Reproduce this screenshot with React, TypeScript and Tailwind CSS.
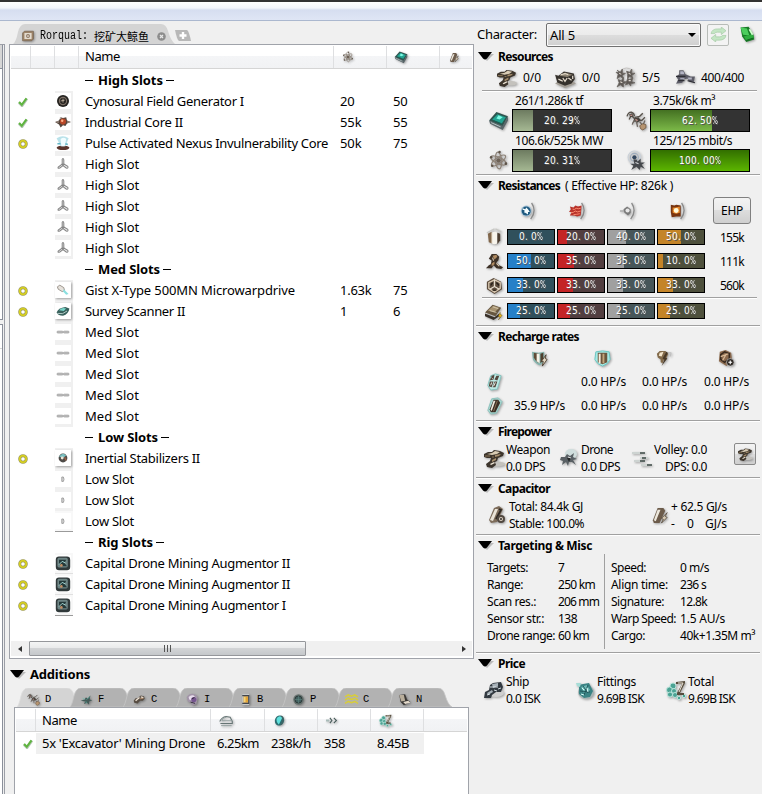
import React, { useLayoutEffect, useRef, useState } from "react";

/* Text run that is tracked so that it fills a given advance width. */
function T({ w, className = "", children }: { w?: number; className?: string; children: string }) {
  const ref = useRef<HTMLSpanElement>(null);
  const [ls, setLs] = useState(0);
  useLayoutEffect(() => {
    if (!w || !ref.current) return;
    ref.current.style.letterSpacing = "0px";
    const natural = ref.current.getBoundingClientRect().width;
    const v = (w - natural) / children.length;
    ref.current.style.letterSpacing = v + "px";
    setLs(v);
  }, [w, children]);
  return (
    <span ref={ref} style={{ letterSpacing: ls }} className={"inline-block w-fit shrink-0 whitespace-pre " + className}>
      {children}
    </span>
  );
}

const art: Record<string, React.ReactNode> = {
  turret: (
    <>
      <ellipse cx="13" cy="16" rx="8" ry="2.5" fill="#c4c2bd" />
      <path d="M0 6l4-2 4 0 2-2 6 1 4 2-1 3-5 2-1 3-2 1 1 3-4 3-5-1-1-3 4-3 1-3-4 0-3-1z" fill="#3d352c" />
      <path d="M3 6l5-1 3-2 5 1-3 2-5 1z" fill="#d9ccb4" />
      <path d="M11 7l6-1-2 2-4 1zM8 12l4-2 0 2-4 2z" fill="#a58d6b" />
      <path d="M6 16l4-2 1 1-4 2z" fill="#efe6d6" />
      <path d="M1 8l5 0M8 9l2 0" stroke="#8b7757" />
    </>
  ),
  launcher: (
    <>
      <path d="M1 15l9 4 10-4-3-2H4z" fill="#a29c93" />
      <path d="M1 7l3 1 5-4 9 2 1 5-3 4-6 2-7-3z" fill="#35312c" />
      <path d="M5 8l5-3 7 2-5 2z" fill="#8e8473" />
      <path d="M4 11l4 2M8 10l2 3 2-3M13 10l3 2M17 8v3" stroke="#e8dfd0" fill="none" strokeWidth="1.1" />
      <path d="M6 7l4-1 3 1" stroke="#e5dccb" fill="none" />
    </>
  ),
  drones: (
    <>
      <circle cx="11" cy="9" r="8" fill="none" stroke="#c0bdbb" strokeWidth=".8" />
      <g stroke="#6b6662" strokeWidth=".8" fill="#5d5854">
        <path d="M2 3l3 2 2-3 0 4 3 0-3 2 1 3-3-2-3 2 1-4-2-2 3 0z" />
        <path d="M11 4l3 1 2-3 0 4 3 0-3 2 1 3-3-2-2 2 0-4z" />
        <path d="M3 12l3 1 2-3 0 4 4 0-4 2 0 3-3-2-3 2 2-4z" />
        <path d="M12 11l2 1 3-2-1 4 3 1-4 1 0 2-2-2-3 1 1-3z" />
      </g>
      <path d="M4 6l2 1M13 6l2 1M5 14l2 1M13 13l2 0" stroke="#e0d8d0" strokeWidth="1" />
    </>
  ),
  calib: (
    <>
      <path d="M1 9l3-2 0-4 4 0 2 4 5 2 4 0-1 5-4 0-2-3-4 1-1 3-6 1 2-4z" fill="#5c5c67" />
      <path d="M5 4l3 0 1 3-4 0zM12 10l4 0 0 2-3 0z" fill="#b3b4c4" />
      <path d="M1 9h9M3 13h6M12 13l7 2" stroke="#2e2e35" strokeWidth="1.1" />
      <path d="M5 11l4 0" stroke="#a6a7b7" strokeWidth="1.300" />
    </>
  ),
  cpu: (
    <>
      <path d="M1 10L8 2l11 4-5 10z" fill="#2f5650" />
      <path d="M1 10l13 5v4L2 13zM14 15l5-9v4l-5 9z" fill="#5a666a" />
      <path d="M4 9l5-5 8 3-4 6z" fill="#23a492" />
      <path d="M8 8l2-3 4 2-3 2z" fill="#7df9e3" />
      <path d="M3 12l9 4" stroke="#b9cccb" strokeWidth=".9" />
      <path d="M5 10l8 3" stroke="#1d5f55" />
    </>
  ),
  atom: (
    <>
      <g fill="none" stroke="#8d8277" strokeWidth="1.1">
        <ellipse cx="10" cy="10" rx="8" ry="3" transform="rotate(25 10 10)" />
        <ellipse cx="10" cy="10" rx="8" ry="3" transform="rotate(85 10 10)" />
        <ellipse cx="10" cy="10" rx="8" ry="3" transform="rotate(145 10 10)" />
      </g>
      <circle cx="10" cy="10" r="2.2" fill="#6d6156" />
      <g fill="#5d5349">
        <circle cx="3" cy="7" r="1.2" /><circle cx="17" cy="13" r="1.3" /><circle cx="11" cy="2" r="1.2" /><circle cx="4" cy="15" r="1.2" />
      </g>
    </>
  ),
  drones2: (
    <>
      <path d="M1 6q1-4 4-4 3 1 3 4M3 9l2-4 3 3M7 12l2-5 4-1 3-3M10 9l5 1 3-3" fill="none" stroke="#57514a" strokeWidth="1.3" />
      <path d="M3 4l3-1 1 3-3 1zM8 8l4-1 2 3-3 2-3-1z" fill="#47423c" />
      <path d="M6 14q1-5 4-3l1 5M13 11l3 4 2-5" fill="none" stroke="#6f6862" strokeWidth="1.3" />
      <path d="M13 15l3-2 3 1 0 3-3 2-2-1z" fill="#b69470" stroke="#6a533c" strokeWidth=".7" />
      <path d="M9 9l2 1M4 5l2 0" stroke="#e7a9a0" />
    </>
  ),
  bandwidth: (
    <>
      <g fill="none" stroke="#c9d0d8"><circle cx="8" cy="7" r="6" /><circle cx="8" cy="7" r="3.8" stroke="#9dadbf" /></g>
      <circle cx="8" cy="7" r="2" fill="#33475f" />
      <path d="M7 9l3 0 1 2 3-3 0 4 4 0-3 2 3 4-4-2-1 3-3-3-5 3 2-4-3-2 4 0z" fill="#45484c" />
      <path d="M9 12l3 1" stroke="#d7d9dd" />
    </>
  ),
  em: (
    <>
      <circle cx="8" cy="10" r="6" fill="#a9c6da" /><circle cx="8" cy="10" r="5" fill="#1f5a80" />
      <path d="M4 7l3 1 1-2 2 2 2 3-2 0 0 3-3-2-1 0 0-3-2 0z" fill="#f4fdff" />
      <path d="M14 1q6 9-1 18" fill="none" stroke="#8a8a8a" strokeWidth="1.5" />
    </>
  ),
  thermal: (
    <>
      <path d="M1 5l4 1 2-2 3 1 4-1-1 11-4 1-3-1-5 0 2-4-3 0 2-3z" fill="#b8332b" />
      <path d="M4 8q2 1 4-1 2 1 5 0M2 12q3 0 5-2 2 2 6 0M5 14q3 0 7-1" stroke="#ff8f72" fill="none" strokeWidth="1" />
      <path d="M14 1q6 9-1 18" fill="none" stroke="#8a8a8a" strokeWidth="1.5" />
    </>
  ),
  kinetic: (
    <>
      <path d="M1 10h6" stroke="#a8a8a8" strokeWidth="1.600" />
      <path d="M5 8l4-3 4 3v4l-3 3-4-3z" fill="#7a7a7a" /><circle cx="9.500" cy="9.500" r="2.3" fill="#e6e6e6" />
      <path d="M14 1q6 9-1 18" fill="none" stroke="#8a8a8a" strokeWidth="1.5" />
    </>
  ),
  explosive: (
    <>
      <path d="M2 3l4 1 2-1 5 1 0 5 0 7-5 0-5 1-1-6z" fill="#78340f" />
      <path d="M4 6l3 0 5-1v7l-4 1-4-1z" fill="#e88a2c" /><circle cx="8" cy="9.5" r="2.7" fill="#fffbdc" />
      <path d="M14 1q6 9-1 18" fill="none" stroke="#8a8a8a" strokeWidth="1.5" />
    </>
  ),
  shield: (
    <>
      <path d="M2 5l8-4M11 1l6 3" stroke="#c8c8c4" fill="none" strokeWidth="1.4" />
      <path d="M3 6l4-2v12l-3-1z" fill="#80664b" />
      <path d="M7 5q4-2 6 0v11q-3 2-6 0z" fill="#f7f4ec" /><path d="M13 5l3 1v7l-3 4z" fill="#4c3e31" />
      <path d="M7 5v11" stroke="#b9a58a" />
    </>
  ),
  armor: (
    <>
      <path d="M7 2l5 0 3 3-1 4-2 2 3 3 4 2-2 2-5-1-3-3-2 3-6 0 3-3 2-1 1-4-3-2 2-3z" fill="#3d3127" />
      <path d="M8 4l4-1 1 2-3 3zM7 12l3-2 0 3-3 2z" fill="#b08b62" />
      <path d="M12 12l3 3M8 6l1 3" stroke="#e3d2b8" strokeWidth="1.1" fill="none" />
    </>
  ),
  hull: (
    <>
      <path d="M9 2l8 4 1 8-8 5-8-5 0-8z" fill="#5d4d3d" />
      <path d="M10 4l6 3v6l-6 4-6-4V7z" fill="none" stroke="#d8c8b1" strokeWidth="1.4" />
      <path d="M10 4v7l-5 3M10 11l5 3" stroke="#e8dfd0" strokeWidth="1.4" fill="none" />
      <path d="M8 7l-2 3M12 7l3 3M8 15h4" stroke="#241d17" strokeWidth="1.3" />
    </>
  ),
  damage: (
    <>
      <path d="M0 11l8-8 9 3-6 9z" fill="#66563f" /><path d="M3 9l6-5 6 2-5 5z" fill="#a69270" />
      <path d="M0 12l10 4 5-4v3l-6 4-9-4z" fill="#383028" />
      <path d="M16 11l-2 4 2 1-2 3 4-5-2-1z" fill="#e8b51a" stroke="#6b541a" strokeWidth=".5" /><path d="M5 9l7 2M8 5l6 2" stroke="#ddd2b8" strokeWidth=".8" />
    </>
  ),
  shieldRegen: (
    <>
      <path d="M2 3l7 1 6-1v9q-2 4-5 5-5-2-7-6z" fill="#86b5af" />
      <path d="M4 4l5 1v10q-4-3-5-6z" fill="#5f4b36" /><path d="M7 5l3 0v10l-3-2z" fill="#f5f1e5" /><path d="M11 5l3-1v8l-3 3z" fill="#4f3f2e" />
      <path d="M17 6l-5 7 2 0-1 5 5-7-2-1z" fill="#e5dac6" stroke="#463828" strokeWidth=".9" />
    </>
  ),
  shieldRep: (
    <>
      <path d="M3 3l7-1 7 1 1 8q-2 5-8 7-6-2-8-7z" fill="#a8eae6" stroke="#69c5c0" />
      <path d="M5 4h10v10l-5 2-5-2z" fill="#6b563d" />
      <path d="M7 5v10" stroke="#f7efe0" strokeWidth="2" /><path d="M11 5v10" stroke="#c2a57c" strokeWidth="2" />
    </>
  ),
  armorRep: (
    <>
      <path d="M3 5l3-3 6 0 3 3-2 5-3 2-1 3-2-1 0-3-3-2z" fill="#816949" /><path d="M6 4l4-1-2 5-3-1z" fill="#f3e5cc" />
      <path d="M13 3l-4 7 2 1-3 7 6-8-2-1 3-5z" fill="#463726" /><path d="M14 4l4 0-1 4" stroke="#bbb" fill="none" />
    </>
  ),
  hullRep: (
    <>
      <path d="M4 3l6-2 6 3 1 9-6 5-8-5z" fill="#8b6a4e" />
      <path d="M5 6l4-3 5 2 0 5-5 4-4-3z" fill="none" stroke="#38291d" strokeWidth="1.6" />
      <path d="M5 8l8-3M7 12l4-7" stroke="#d8b996" strokeWidth="1.2" />
      <circle cx="15" cy="14" r="4" fill="#2d2823" stroke="#ddd" strokeWidth=".6" /><path d="M15 12v4M13 14h4" stroke="#fff" strokeWidth="1.2" />
    </>
  ),
  burst: (
    <>
      <path d="M6 4l5-2 6 2-4 14-7 1-3-5z" fill="#bdeae5" stroke="#83c3be" />
      <path d="M7 4l3-1-1 5-4 1zM12 4l3 0-2 5-3-1zM5 10l4 0-2 6-3-1zM10 10l3 0-2 6-3 0z" fill="#54483e" />
      <path d="M7 6l1 1M6 14l1-3M9 15l2-4" stroke="#f6f2ea" />
    </>
  ),
  sustain: (
    <>
      <path d="M7 3l7-1 4 4-6 12-6 1-3-4z" fill="#a9d8d2" stroke="#8cc2bd" />
      <path d="M9 4l5 0 2 3-5 10-5 0-1-3z" fill="#3a2f26" /><path d="M9 5l2 0-4 11-1-2z" fill="#f0eadf" /><path d="M13 5l-4 11" stroke="#8c7255" />
    </>
  ),
  spider: (
    <>
      <ellipse cx="12" cy="6" rx="6" ry="5" fill="#d0dedd" />
      <path d="M2 9l4 0 2-3 3 2 4-3-1 4 4 2-4 1 3 5-4-3-3 0-1 4-2-4-4 3 1-4-3-1z" fill="#596064" />
      <path d="M8 10l4 0-2 4z" fill="#24292a" /><path d="M9 9l3 1" stroke="#fff" strokeWidth=".8" />
    </>
  ),
  volley: (
    <>
      <path d="M0 5h8M2 13h8M8 10h8M9 17h8" stroke="#cdd3d1" strokeWidth="2" />
      <path d="M8 5h5M10 10h4M8 13h5M15 17h5" stroke="#3c4946" strokeWidth="1.7" />
    </>
  ),
  cap: (
    <>
      <path d="M7 3l5-2 4 3-6 13-6 1-2-3z" fill="#7d6c5a" /><path d="M8 4l3 0-5 12-3-1z" fill="#ebe4d8" />
      <path d="M12 4l2 1-5 9" stroke="#2f2924" strokeWidth="1.8" fill="none" />
      <circle cx="14" cy="14" r="4" fill="#514840" /><circle cx="14" cy="14" r="2" fill="#ddd3c5" /><circle cx="14" cy="14" r="1" fill="#302b27" />
    </>
  ),
  capFlow: (
    <>
      <path d="M7 2l6 0 2 3-6 13-6 0-1-3z" fill="#6c5b4a" /><path d="M7 4l3 0-5 12-2-1z" fill="#ede8dd" />
      <path d="M17 7l-6 6 2 1-2 4 6-6-2-1z" fill="#d5c8b2" stroke="#4a3d30" strokeWidth=".8" />
    </>
  ),
  ship: (
    <>
      <ellipse cx="12" cy="13" rx="8" ry="4" fill="#cfcfcf" />
      <path d="M6 5l3-2 8-1 2 5-2 5-5 0-4 3-1 3-7 0 1-6 4-2z" fill="#333a41" />
      <path d="M8 4l6-1 0 3-5 2zM3 13l5-3 1 2-5 3z" fill="#a6b0b7" />
      <path d="M6 7l8 0M14 9l3-1M3 15l3-1M10 10l3 1" stroke="#e4edf2" strokeWidth=".9" />
    </>
  ),
  fittings: (
    <>
      <ellipse cx="11" cy="12" rx="8" ry="7" fill="#a8b5b4" />
      <path d="M4 5l4-1 6-1 4 8-3 6-6 1-5-4z" fill="#3a8384" />
      <path d="M6 7l6-2 3 5-6 3z" fill="#6fbab6" /><path d="M1 3l5 0-1 4-3-1z" fill="#a6ddd7" />
      <path d="M8 6l5 7M13 5l-4 10M5 11l10 1" stroke="#1d5054" strokeWidth=".9" />
      <path d="M7 8l2 2M12 8l1 4M6 14l3 1" stroke="#d8fffb" />
    </>
  ),
  total: (
    <>
      <g fill="#4ca394" stroke="#bfe8df" strokeWidth=".9">
        <circle cx="7" cy="6" r="3" /><circle cx="3.500" cy="10" r="3" /><circle cx="8" cy="11" r="2.5" /><circle cx="4" cy="14.500" r="2.500" /><circle cx="9" cy="15" r="2.5" /><circle cx="13" cy="18" r="1.7" /><circle cx="18" cy="16" r="1.7" />
      </g>
      <path d="M10 2l9-1 0 2-5 10 4 0 0 2-7 0 0-2 5-9-6 0z" fill="#574d3d" /><path d="M12 3h5l-4 9" stroke="#f6efe3" strokeWidth=".9" fill="none" />
    </>
  ),
  cyno: (
    <>
      <circle cx="10" cy="10" r="7.500" fill="#24221f" /><circle cx="10" cy="10" r="4.500" fill="none" stroke="#7c7066" strokeWidth="1.5" />
      <path d="M10 7v5M7 10l5-1" stroke="#cdbcaa" />
    </>
  ),
  core: (
    <>
      <path d="M0 10l5-2 2-4 3 1 4-1 1 4 5 2-5 2-2 3-3-1-3 3-2-4z" fill="#55453c" />
      <circle cx="10" cy="9.500" r="3.800" fill="#b84727" /><circle cx="9" cy="8.5" r="1.5" fill="#ffb087" /><path d="M2 10h3M15 10h3M6 5l2 1" stroke="#d0c2b6" />
    </>
  ),
  nexus: (
    <>
      <ellipse cx="10" cy="16" rx="8" ry="2.800" fill="#5a352d" />
      <path d="M2 4q8-5 15 0l-4 10H7z" fill="#b9e2ea" /><path d="M7 5q4-3 7 0l-2 9H8z" fill="#f1fdff" />
      <path d="M3 11h4M13 11l3 1" stroke="#61b5c5" strokeWidth="2" />
    </>
  ),
  mwd: (
    <>
      <path d="M3 6l3-2 5 3 1 4-3 1-5-3z" fill="#e6e2dc" stroke="#8a8279" /><path d="M11 9l6 6-3 1-4-4z" fill="#8adfe0" />
    </>
  ),
  scanner: (
    <>
      <path d="M2 12q2-6 11-7l5 2q-1 7-8 9-6 0-8-4z" fill="#38615c" /><path d="M5 9q4-4 9-2l-3 3z" fill="#77d5c9" /><path d="M3 13q7 2 12-3" stroke="#d0e3df" fill="none" />
    </>
  ),
  inertia: (
    <>
      <circle cx="10" cy="10" r="5.5" fill="#4e4b48" /><path d="M5 8q5-6 9-1l-4 3z" fill="#79bfc0" /><circle cx="9" cy="10" r="1.800" fill="#eee5d6" /><path d="M12 9l2 4" stroke="#9b5f44" strokeWidth="1.800" />
    </>
  ),
  rig: (
    <>
      <rect x="1" y="2" width="18" height="17" rx="4" fill="#30393a" /><rect x="3" y="3.500" width="13" height="12" rx="2" fill="#6e8585" />
      <path d="M5 6h9l-2 4 3 4H9l-4-3z" fill="#24393a" /><path d="M5 12l4-4 4 2" stroke="#a9ddd7" fill="none" strokeWidth="1.2" /><circle cx="8" cy="13" r="1.6" fill="#c48e65" />
    </>
  ),
  high: (
    <g fill="#eee" stroke="#858585" strokeWidth="1.3">
      <path d="M9 4q1.500-2 2 1v6H9z" /><path d="M9 10l1 2-4 3q-3 1-2-1z" /><path d="M11 10l5 3q1 3-2 2l-4-3z" />
    </g>
  ),
  med: (
    <g fill="#c4c4c4" stroke="#a0a0a0" strokeWidth="1.1"><rect x="2.500" y="9" width="7.500" height="2.2" rx="1" /><rect x="10.500" y="9" width="7" height="2.2" rx="1" /></g>
  ),
  low: <path d="M8.500 7.500h2q1.500 3 0 5.500h-2z" fill="#d6d6d6" stroke="#9a9a9a" strokeWidth="1.1" />,
  range: (
    <>
      <path d="M1 12q3-6 9-7l6 1 3 6v3H2" fill="none" stroke="#657474" strokeWidth="1.5" /><path d="M10 6q-5 1-6 5h15M3 18h15" stroke="#93a09f" fill="none" strokeWidth="1.3" />
    </>
  ),
  speed: (
    <>
      <ellipse cx="10" cy="10" rx="7" ry="8" fill="#2b6d70" transform="rotate(25 10 10)" /><path d="M6 6q5-5 8 0l-5 10q-5-4-3-10z" fill="#5fe0dd" /><path d="M13 3q6 5-1 14" stroke="#4e5c5c" fill="none" strokeWidth="1.5" />
    </>
  ),
  track: <><path d="M0 10h5" stroke="#a8bbb8" strokeWidth="3" /><path d="M6 6l3 4-3 4M12 6l4 4-4 4" fill="none" stroke="#465a58" strokeWidth="1.7" /></>,
  fighter: (
    <>
      <path d="M1 12l6-2 2-3 3 1 4-4-1 6 4 1-5 2 0 5-3-3-5 2 2-4z" fill="#435a57" /><path d="M4 8l4 2M10 10l5-4M9 13l1 3" stroke="#65c7b6" strokeWidth=".9" />
    </>
  ),
  cargo: (
    <>
      <path d="M1 12l3-4 3 0 5-4 5 1 1 4-3 3-4 0-4 4-5-1z" fill="#574d43" /><path d="M4 12l6-5M12 6l4 1" stroke="#f0e4d5" strokeWidth="2" /><path d="M11 9l5-1" stroke="#b59070" strokeWidth="1.5" />
    </>
  ),
  implant: (
    <>
      <path d="M1 7q2-6 9-6 7 1 8 7l-2 9-6 2-2-4-5-2z" fill="#a294a8" /><path d="M4 6q4-4 8-2l3 4-5 4-5-2z" fill="#e8ddec" /><circle cx="12" cy="10" r="4" fill="#75558e" /><path d="M7 14l7 2M9 9l4-2" stroke="#302738" strokeWidth="1.4" />
    </>
  ),
  booster: (
    <>
      <rect x="5" y="1" width="11" height="18" rx="2" fill="#c5c8c9" /><path d="M7 5h7v10H7z" fill="#e3a537" /><path d="M5 4h11M5 16h11M15 4v12" stroke="#42454b" strokeWidth="1.800" /><path d="M9 6v8" stroke="#fff1a1" strokeWidth="1.500" />
    </>
  ),
  projected: (
    <>
      <circle cx="10" cy="10" r="8" fill="#66726f" /><circle cx="10" cy="10" r="5.500" fill="#42605f" stroke="#2d393a" strokeWidth="1.5" /><path d="M4 10h12M10 4v12" stroke="#67908a" strokeWidth=".7" />
    </>
  ),
  command: <path d="M0 6l5-3 5 2 5-2 5 3M0 11l5-3 5 2 5-2 5 3M0 16l5-3 5 2 5-2 5 3" fill="none" stroke="#d8cd3a" strokeWidth="2.3" />,
  note: (
    <>
      <path d="M2 3l9-1 3 8 5 4-10 5-5-5z" fill="#3b3835" /><path d="M2 3l7 0 2 9-6 1z" fill="#b9ae9b" /><path d="M8 14l8-2 3 3-8 2z" fill="#e4dacb" />
    </>
  ),
  save: (
    <>
      <path d="M2 2l10-1 6 10 1 6-10 3-5-7z" fill="#177b25" /><path d="M2 2l8 1 3 9-8-1z" fill="#4ccd5d" /><path d="M6 13l11-3 2 5-10 3z" fill="#2fae3f" /><path d="M13 4l4 7" stroke="#d2ffd1" strokeWidth="2.200" /><path d="M9 18l9-3" stroke="#0b541a" />
    </>
  ),
  shipTab: (
    <>
      <path d="M1 5l3-3h15v13l-3 3H1z" fill="#9d8468" stroke="#6b5743" /><path d="M4 5h12v10H4z" fill="#e3dbcf" /><circle cx="10" cy="10" r="3.2" fill="#8b7661" /><circle cx="10" cy="10" r="1.4" fill="#f6f0e8" />
    </>
  ),
};

const flat = ["high", "med", "low", "rig", "cyno", "core", "nexus", "command"];
const Ic = ({ n, className = "size-5" }: { n: string; className?: string }) => (
  <svg viewBox="0 0 20 20" className={"shrink-0 overflow-visible " + (flat.includes(n) ? "" : "[filter:drop-shadow(1px_1px_1px_#00000055)] ") + className}>{art[n]}</svg>
);

const Check = () => (
  <svg viewBox="0 0 10 10" className="size-[10px]">
    <path d="M1 5.5L4 8.5 8.8 1.5" fill="none" stroke="#b5c6b5" strokeWidth="3" />
    <path d="M1 5L3.8 7.8 8.5 1.3" fill="none" stroke="#5fb53f" strokeWidth="2" />
  </svg>
);
const Ring = () => (
  <svg viewBox="0 0 10 10" className="size-[10px]">
    <circle cx="5" cy="5" r="3.3" fill="none" stroke="#9b9966" strokeWidth="3" />
    <circle cx="5" cy="5" r="3.3" fill="none" stroke="#d6cf1e" strokeWidth="1.8" />
  </svg>
);

const Tri = () => (
  <svg viewBox="0 0 16 9" className="h-[9px] w-4 shrink-0">
    <path d="M2 2h14L9 9z" fill="#bbb" /><path d="M0 0h14L9 6.5Q7 8.5 5 6.5z" fill="#000" />
  </svg>
);

/* Fixed pitch label: every character sits in a six pixel cell. */
const Cells = ({ children }: { children: string }) => (
  <span className="flex font-['DejaVu_Sans_Condensed','DejaVu_Sans',sans-serif] text-[10px] leading-none text-white [text-shadow:1px_1px_0_#555]">
    {children.split("").map((c, i) => (
      <span key={i} className={c === "%" ? "w-[6px] origin-left scale-x-[0.68]" : "w-[6px]"}>{c}</span>
    ))}
  </span>
);

type Slot = [string, string, string, number, string?, string?];
const slots: Slot[] = [
  ["h", "", "High Slots", 65],
  ["c", "cyno", "Cynosural Field Generator I", 159, "20", "50"],
  ["c", "core", "Industrial Core II", 98, "55k", "55"],
  ["r", "nexus", "Pulse Activated Nexus Invulnerability Core", 243, "50k", "75"],
  ["", "high", "High Slot", 54], ["", "high", "High Slot", 54], ["", "high", "High Slot", 54], ["", "high", "High Slot", 54], ["", "high", "High Slot", 54],
  ["h", "", "Med Slots", 62],
  ["r", "mwd", "Gist X-Type 500MN Microwarpdrive", 210, "1.63k", "75"],
  ["r", "scanner", "Survey Scanner II", 100, "1", "6"],
  ["", "med", "Med Slot", 54], ["", "med", "Med Slot", 54], ["", "med", "Med Slot", 54], ["", "med", "Med Slot", 54], ["", "med", "Med Slot", 54],
  ["h", "", "Low Slots", 60],
  ["r", "inertia", "Inertial Stabilizers II", 115],
  ["", "low", "Low Slot", 49], ["", "low", "Low Slot", 49], ["", "low", "Low Slot", 49],
  ["h", "", "Rig Slots", 55],
  ["r", "rig", "Capital Drone Mining Augmentor II", 205],
  ["r", "rig", "Capital Drone Mining Augmentor II", 205],
  ["r", "rig", "Capital Drone Mining Augmentor I", 201],
];
const numWidth: Record<string, number> = { "20": 14.5, "50": 14.5, "55k": 21.5, "55": 14.5, "50k": 21.5, "75": 14.5, "1.63k": 31.5, "1": 7, "6": 7 };

const headBg = "bg-[linear-gradient(#fff_0%,#fff_45%,#f4f5f7_46%,#f1f2f4_100%)] border-b border-[#d5d5d5]";

function SlotRow({ s, underlined }: { s: Slot; underlined: boolean }) {
  const [st, icon, name, w, a, b] = s;
  return (
    <div className="flex h-[21px] items-center">
      <div className="flex w-[44px] pl-[7px]">{st === "c" ? <Check /> : st === "r" ? <Ring /> : null}</div>
      <div className="h-[21px] w-[30px]">
        {icon && (
          <div className={"h-[21px] w-[18px] pt-[2px] " + (underlined ? "border-b border-[#9a9a9a] bg-[#f8f8f8]" : icon === "rig" ? "border-b border-[#e0e0e0] bg-[#f8f8f8]" : "bg-[#f0f0f0]")}>
            <Ic n={icon} className="size-4 bg-white" />
          </div>
        )}
      </div>
      {st === "h" ? (
        <div className="flex h-[21px] items-center">
          <span className="h-px w-[8px] bg-black" />
          <T w={w} className="mr-[3px] ml-[5px] font-bold">{name}</T>
          <span className="h-px w-[8px] bg-black" />
        </div>
      ) : (
        <div className="w-[255px]"><T w={w}>{name}</T></div>
      )}
      {a && <div className="w-[53px]"><T w={numWidth[a]}>{a}</T></div>}
      {b && <T w={numWidth[b]}>{b}</T>}
    </div>
  );
}

function ResourceBar({ icon, label, lw, pct, fill, v }: { icon: string; label: string; lw: number; pct: string; fill: string; v: number }) {
  return (
    <div className="flex w-[138px] shrink-0 items-end">
      <div className="flex h-[23px] w-[24px] items-center"><Ic n={icon} className="size-[21px]" /></div>
      <div>
        <div className="h-[17px] pl-[3px] leading-[17px]"><T w={lw}>{label}</T></div>
        <div className="relative h-[23px] w-[100px] border border-black bg-[#333]">
          <div className={"h-full " + fill} style={{ width: v + "%" }} />
          <div className="absolute inset-0 flex items-center justify-center"><Cells>{pct}</Cells></div>
        </div>
      </div>
    </div>
  );
}

const kinds = [
  ["bg-[#2680c8]", "bg-[#30505c]"],
  ["bg-[#c42426]", "bg-[#523e40]"],
  ["bg-[#a0a0a0]", "bg-[#475659]"],
  ["bg-[#c48428]", "bg-[#4e503c]"],
];
function ResistRow({ icon, values, ehp }: { icon: string; values: number[]; ehp?: string }) {
  return (
    <div className="flex h-[24px] items-center pl-[9px]">
      <Ic n={icon} className="mr-[3px] size-[19px]" />
      {values.map((v, i) => (
        <div key={i} className={"relative mr-[2px] h-4 w-12 border border-black " + kinds[i][1]}>
          <div className={"h-full " + kinds[i][0]} style={{ width: v + "%" }} />
          <div className="absolute inset-0 flex items-center justify-center"><Cells>{v.toFixed(1) + "%"}</Cells></div>
        </div>
      ))}
      {ehp && <T w={24} className="ml-[13px]">{ehp}</T>}
    </div>
  );
}

const Title = ({ w, children }: { w: number; children: string }) => (
  <div className="flex h-[18px] items-center pl-[2px]"><Tri /><T w={w} className="ml-[4px] font-bold">{children}</T></div>
);
const Rule = () => <div className="h-[2px] w-[284px] border-b border-b-white bg-[#a0a0a0] bg-clip-padding" />;
const InnerRule = () => <div className="ml-[6px] h-[2px] w-[275px] border-b border-b-white bg-[#a0a0a0] bg-clip-padding" />;
const Pair = ({ icon, a, aw, b, bw, cls, right = false }: { icon: string; a: string; aw: number; b: string; bw: number; cls: string; right?: boolean }) => (
  <div className={"flex items-center " + cls}>
    <Ic n={icon} className="mr-[2px] size-5" />
    <div className={"flex flex-col leading-[17px] " + (right ? "items-end" : "items-start")}><T w={aw}>{a}</T><T w={bw}>{b}</T></div>
  </div>
);

const misc: [string, number, string, number][][] = [
  [["Targets:", 41, "7", 7], ["Range:", 36, "250 km", 37], ["Scan res.:", 49, "206 mm", 41], ["Sensor str.:", 57, "138", 19], ["Drone range:", 68, "60 km", 31]],
  [["Speed:", 35, "0 m/s", 29], ["Align time:", 57, "236 s", 26], ["Signature:", 53, "12.8k", 27], ["Warp Speed:", 65, "1.5 AU/s", 45], ["Cargo:", 34, "40k+1.35M m³", 75]],
];

const tabs = [["drones2", "D"], ["fighter", "F"], ["cargo", "C"], ["implant", "I"], ["booster", "B"], ["projected", "P"], ["command", "C"], ["note", "N"]];

export default function App() {
  return (
    <div className="flex h-[794px] w-[762px] flex-col overflow-hidden bg-[#f0f0f0] font-['Noto_Sans','Noto_Sans_CJK_SC',sans-serif] text-[13px] leading-[21px] text-black">
      <header className="h-[21px] shrink-0 border-t-2 border-b border-t-[#333] border-b-[#abb8cf] bg-[linear-gradient(#fff_0px,#f4f6fc_6px,#d6def0_8px,#dfe6f5_18px)]" />
      <div className="flex min-h-0 flex-1">
        <aside className="w-[9px] shrink-0 pt-[23px]">
          <div className="flex h-full w-[5px] flex-col gap-[4px] border-t border-r border-[#9b9ea6] bg-[#f0f0f0]">
            <div className="h-[275px] w-[3px] border-r border-b border-[#8a8f9a] bg-white"><div className="h-6 border-b border-[#8a8f9a] bg-[#d6d6d6]" /></div>
            <div className="w-[3px] flex-1 border-t border-r border-[#8a8f9a] bg-white"><div className="h-6 border-b border-[#d5d5d5]" /></div>
          </div>
        </aside>
        <main className="flex w-[465px] shrink-0 flex-col">
          <div className="flex h-[23px] items-end pl-[4px]">
            <div className="relative flex h-5 w-[162px] items-center pt-[4px] pl-[9px]">
              <svg viewBox="0 0 162 20" className="absolute inset-0 h-5 w-[162px]"><path d="M0 20Q3 18 5 8 7 0 12 0H148Q153 0 155 7 158 17 162 20z" fill="#d4d4d4" /></svg>
              <Ic n="shipTab" className="relative size-[12px]" />
              <span className="relative ml-[6px] inline-block w-[54px] origin-left scale-x-[0.835] font-['Liberation_Mono',monospace] text-[12px] leading-none">Rorqual:</span>
              <span className="relative font-['Noto_Sans_CJK_SC',sans-serif] text-[11px] leading-none">挖矿大鲸鱼</span>
              <svg viewBox="0 0 9 9" className="relative ml-[8px] size-[9px]"><circle cx="4.5" cy="4.5" r="4.3" fill="#8d8d8d" /><path d="M3 3l3 3M6 3L3 6" stroke="#e8e8e8" strokeWidth="1.2" /></svg>
            </div>
            <svg viewBox="0 0 16 11" className="mb-[3px] h-[11px] w-4"><path d="M0 0h12q2 1 4 11H4Q2 10 0 0z" fill="#b8b8b8" /><path d="M8 2v7M4.500 5.500h7" stroke="#fff" strokeWidth="2.4" /></svg>
          </div>
          <section className="flex h-[615px] flex-col border border-[#a0a3aa] bg-white pt-px pl-px">
            <div className={"mr-px flex h-[23px] shrink-0 items-center " + headBg}>
              <div className="h-[22px] w-[20px] border-r border-[#dedfe1]" />
              <div className="h-[22px] w-[24px] border-r border-[#dedfe1]" />
              <div className="h-[22px] w-[24px] border-r border-[#dedfe1]" />
              <div className="h-[22px] w-[255px] border-r border-[#dedfe1] pl-[6px]"><T w={35}>Name</T></div>
              <div className="flex h-[22px] w-[53px] items-center border-r border-[#dedfe1] pl-[8px]"><Ic n="atom" className="size-[12px]" /></div>
              <div className="flex h-[22px] w-[53px] items-center border-r border-[#dedfe1] pl-[7px]"><Ic n="cpu" className="size-[14px]" /></div>
              <div className="flex h-[22px] items-center pl-[9px]"><Ic n="capFlow" className="size-[11px]" /></div>
            </div>
            <div className="pt-px">{slots.map((s, i) => <SlotRow key={i} s={s} underlined={i === 21 || i === 25} />)}</div>
            <div className="mt-auto mr-px mb-[2px] flex h-[15px] shrink-0 bg-[#f0f0f0]">
              <div className="flex w-[18px] items-center justify-center"><svg viewBox="0 0 4 6" className="h-[6px] w-1"><path d="M4 0v6L0 3z" fill="#333" /></svg></div>
              <div className="flex w-[277px] items-center justify-center gap-[2px] rounded-[1px] border border-[#95979b] bg-[linear-gradient(#f4f5f5_0%,#e9eaeb_48%,#d2d4d6_50%,#c5c8cb_100%)]">
                <i className="h-[7px] w-px bg-[#555]" /><i className="h-[7px] w-px bg-[#555]" /><i className="h-[7px] w-px bg-[#555]" />
              </div>
              <div className="flex flex-1 items-center justify-end pr-[6px]"><svg viewBox="0 0 4 6" className="h-[6px] w-1"><path d="M0 0v6l4-3z" fill="#333" /></svg></div>
            </div>
          </section>
          <div className="flex h-[29px] items-center pt-px pl-px"><Tri /><T w={60} className="ml-[4px] font-bold">Additions</T></div>
          <div className="flex h-[19px] pl-[8px]">
            {tabs.map(([icon, l], i) => (
              <div key={i} className="relative h-[19px] w-[53px] shrink-0">
                <svg viewBox="0 0 64 19" className="absolute top-0 left-0 h-[19px] w-16">
                  <path d="M0 19Q2 17 4 8 6 0 11 0H50Q55 0 57 7 60 17 64 19z" fill={i ? "#b2b2b2" : "#d4d4d4"} stroke={i ? "#c6c6c6" : "#dedede"} strokeWidth=".8" />
                </svg>
                <div className="relative flex h-full items-center pt-[4px] pl-[10px]">
                  <Ic n={icon} className="size-[13px]" />
                  <span className="ml-[5px] font-['Liberation_Mono',monospace] text-[10.500px] leading-none">{l}</span>
                </div>
              </div>
            ))}
          </div>
          <section className="ml-[5px] w-[455px] flex-1 border-t border-r border-l border-[#a0a3aa] bg-white pt-px pr-px pl-px">
            <div className={"flex h-[23px] items-center " + headBg}>
              <div className="h-[22px] w-[20px] border-r border-[#dedfe1]" />
              <div className="h-[22px] w-[175px] border-r border-[#dedfe1] pt-px pl-[6px]"><T w={35}>Name</T></div>
              <div className="flex h-[22px] w-[54px] items-center border-r border-[#dedfe1] pl-[8px]"><Ic n="range" className="size-[14px]" /></div>
              {["speed", "track", "total"].map((n) => (
                <div key={n} className="flex h-[22px] w-[53px] items-center border-r border-[#dedfe1] pl-[8px]"><Ic n={n} className="size-[13px]" /></div>
              ))}
            </div>
            <div className="mt-px flex h-[21px] items-center">
              <div className="w-[20px] pl-[7px]"><Check /></div>
              <div className="flex h-[21px] w-[388px] bg-[#f0f0f0] pl-[6px]">
                <div className="w-[175px]"><T w={163}>5x 'Excavator' Mining Drone</T></div>
                <div className="w-[54px]"><T w={42}>6.25km</T></div>
                <div className="w-[53px]"><T w={40}>238k/h</T></div>
                <div className="w-[53px]"><T w={21}>358</T></div>
                <T w={32}>8.45B</T>
              </div>
            </div>
          </section>
        </main>

        <aside className="flex w-[286px] flex-col pl-[2px] text-[12px] leading-[17px]">
          <div className="flex h-[26px] shrink-0 items-center pl-[1px]">
            <T w={60} className="text-[13px]">Character:</T>
            <div className="mt-[2px] ml-[9px] flex h-[24px] w-[155px] items-center justify-between rounded-[2px] border border-[#707070] bg-[linear-gradient(#f2f2f2_0%,#ebebeb_48%,#dddddd_50%,#cfcfcf_100%)] pr-[4px] pl-[3px] shadow-[inset_0_0_0_1px_#fafafa]">
              <T w={25} className="text-[13px]">All 5</T>
              <svg viewBox="0 0 8 4" className="h-1 w-2"><path d="M0 0h8L4 4z" /></svg>
            </div>
            <div className="mt-[1px] ml-[6px] flex size-[22px] items-center justify-center rounded-[2px] border border-[#b8bcb8] bg-[#f3f3f3]">
              <svg viewBox="0 0 18 16" className="h-[15px] w-[17px]"><path d="M1 7q1-5 7-5h4V0l5 4-5 4V5.500H8Q5 5.500 5 7z" fill="#c4e6c4" stroke="#a3c9a4" strokeWidth=".7" /><path d="M17 9q-1 5-7 5H6v2l-5-4 5-4v2.500h4q3 0 3-1.500z" fill="#c4e6c4" stroke="#a3c9a4" strokeWidth=".7" /></svg>
            </div>
            <Ic n="save" className="ml-[10px] size-[16px]" />
          </div>
          <Title w={55}>Resources</Title>
          <div className="flex h-[25px] items-center pl-[21px]">
            <Ic n="turret" className="size-[19px]" /><T w={18} className="ml-[7px]">0/0</T>
            <Ic n="launcher" className="ml-[13px] size-[22px]" /><T w={18} className="ml-[6px]">0/0</T>
            <Ic n="drones" className="ml-[15px] size-[21px]" /><T w={18} className="ml-[6px]">5/5</T>
            <Ic n="calib" className="ml-[15px] size-[21px]" /><T w={43} className="ml-[5px]">400/400</T>
          </div>
          <InnerRule />
          <div className="flex h-[40px] pl-[12px]">
            <ResourceBar icon="cpu" label="261/1.286k tf" lw={68} pct="20.29%" v={20} fill="bg-[linear-gradient(#6d7b60,#a5b893)]" />
            <ResourceBar icon="drones2" label="3.75k/6k m³" lw={62} pct="62.50%" v={62.5} fill="bg-[linear-gradient(#447122,#7cb948)]" />
          </div>
          <div className="flex h-[40px] pl-[12px]">
            <ResourceBar icon="atom" label="106.6k/525k MW" lw={88} pct="20.31%" v={20} fill="bg-[linear-gradient(#6d7b60,#a5b893)]" />
            <ResourceBar icon="bandwidth" label="125/125 mbit/s" lw={79} pct="100.00%" v={100} fill="bg-[linear-gradient(#326f00,#5cb500)]" />
          </div>
          <div className="h-[2px]" />
          <Rule />
          <div className="flex h-[19px] items-center pl-[2px]"><Tri /><T w={62} className="ml-[4px] font-bold">Resistances</T><T w={108} className="ml-[5px]">( Effective HP: 826k )</T></div>
          <div className="flex h-[30px] items-center pt-px pl-[43px]">
            {["em", "thermal", "kinetic", "explosive"].map((n) => <Ic key={n} n={n} className="mr-[32px] size-[18px]" />)}
            <button className="-ml-[6px] h-[27px] w-[38px] rounded-[3px] border border-[#808080] bg-[linear-gradient(#f3f3f3_0%,#ebebeb_48%,#dddddd_50%,#cfcfcf_100%)]"><T w={22}>EHP</T></button>
          </div>
          <ResistRow icon="shield" values={[0, 20, 40, 50]} ehp="155k" />
          <ResistRow icon="armor" values={[50, 35, 35, 10]} ehp="111k" />
          <ResistRow icon="hull" values={[33, 33, 33, 33]} ehp="560k" />
          <InnerRule />
          <ResistRow icon="damage" values={[25, 25, 25, 25]} />
          <div className="h-[2px]" />
          <Rule />
          <Title w={81}>Recharge rates</Title>
          <div className="flex h-[24px] items-center pt-[2px] pl-[54px]">
            <Ic n="shieldRegen" className="mr-[44px] size-[19px]" /><Ic n="shieldRep" className="mr-[42px] size-[19px]" /><Ic n="armorRep" className="mr-[43px] size-[19px]" /><Ic n="hullRep" className="size-[19px]" />
          </div>
          {[["burst", ""], ["sustain", "35.9 HP/s"]].map(([icon, regen]) => (
            <div key={icon} className="flex h-[24px] items-center pl-[9px]">
              <div className="w-[29px]"><Ic n={icon} className="size-[19px]" /></div>
              <div className="w-[67px]">{regen && <T w={51}>{regen}</T>}</div>
              <div className="w-[61px]"><T w={45}>0.0 HP/s</T></div>
              <div className="w-[62px]"><T w={45}>0.0 HP/s</T></div>
              <T w={45}>0.0 HP/s</T>
            </div>
          ))}
          <div className="h-[3px]" />
          <Rule />
          <Title w={53}>Firepower</Title>
          <div className="flex h-[37px] items-center pb-px pl-[8px]">
            <Pair cls="w-[75px]" icon="turret" a="Weapon" aw={44} b="0.0 DPS" bw={39} />
            <Pair cls="w-[73px]" icon="spider" a="Drone" aw={32} b="0.0 DPS" bw={39} />
            <Pair cls="w-[102px]" icon="volley" a="Volley: 0.0" aw={53} b="DPS: 0.0" bw={42} right />
            <div className="-mt-[8px] flex size-[22px] items-center justify-center rounded-[2px] border border-[#8a8a8a] bg-[linear-gradient(#f3f3f3_0%,#ebebeb_48%,#dddddd_50%,#cfcfcf_100%)]"><Ic n="turret" className="size-[14px]" /></div>
          </div>
          <Rule />
          <Title w={52}>Capacitor</Title>
          <div className="flex h-[36px] items-center pl-[11px]">
            <Pair cls="w-[164px]" icon="cap" a="Total: 84.4k GJ" aw={74} b="Stable: 100.0%" bw={75} />
            <Ic n="capFlow" className="size-[19px]" />
            <div className="ml-px leading-[17px]">
              <div className="flex"><T w={56}>+ 62.5 GJ/s</T></div>
              <div className="flex"><T w={16}>- </T><T w={18}>0</T><T w={22}>GJ/s</T></div>
            </div>
          </div>
          <div className="h-px" />
          <Rule />
          <Title w={94}>Targeting &amp; Misc</Title>
          <div className="flex h-[97px] pl-[11px]">
            {misc.map((col, i) => (
              <div key={i} className={i ? "h-[95px] border-l border-[#a0a0a0] pt-[5px] pl-[6px]" : "w-[117px] pt-[5px]"}>
                {col.map(([l, lw, v, vw]) => (
                  <div key={l} className="flex h-[17px]"><div className={i ? "w-[69px]" : "w-[71px]"}><T w={lw}>{l}</T></div><T w={vw}>{v}</T></div>
                ))}
              </div>
            ))}
          </div>
          <div className="h-px" />
          <Rule />
          <Title w={27}>Price</Title>
          <div className="flex h-[36px] items-center pl-[8px]">
            <Pair cls="w-[91px]" icon="ship" a="Ship" aw={23} b="0.0 ISK" bw={34} />
            <Pair cls="w-[91px]" icon="fittings" a="Fittings" aw={39} b="9.69B ISK" bw={47} />
            <Pair cls="" icon="total" a="Total" aw={26} b="9.69B ISK" bw={47} />
          </div>
        </aside>
      </div>
    </div>
  );
}
